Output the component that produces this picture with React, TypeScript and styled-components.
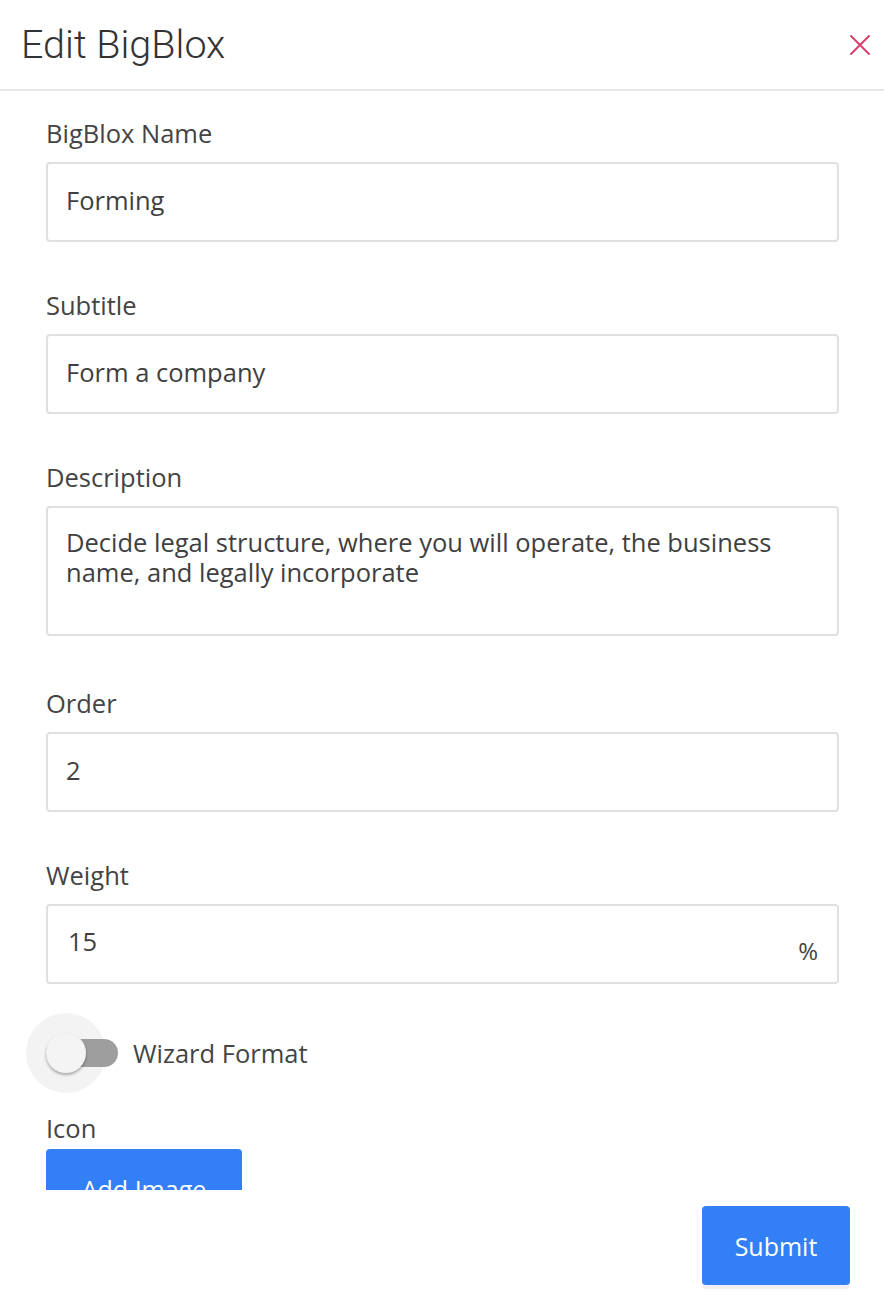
import React from 'react';
import styled, { createGlobalStyle } from 'styled-components';

const GlobalStyle = createGlobalStyle`
  html, body {
    margin: 0;
    padding: 0;
    background: #fff;
  }
  * {
    box-sizing: border-box;
  }
`;

const Modal = styled.div`
  width: 884px;
  height: 1300px;
  display: flex;
  flex-direction: column;
  font-family: 'Open Sans', Lato, sans-serif;
  color: #3f3f3f;
  background: #fff;
`;

const Header = styled.div`
  height: 91px;
  flex: none;
  display: flex;
  align-items: center;
  justify-content: space-between;
  padding: 0 12px 0 21px;
  border-bottom: 2px solid #e6e6e6;
`;

const Heading = styled.h1`
  margin: 0;
  font-family: Roboto, 'Liberation Sans', sans-serif;
  font-weight: 300;
  font-size: 39.5px;
  color: #333;
`;

const CloseButton = styled.button`
  border: 0;
  background: none;
  padding: 0;
  width: 24px;
  height: 24px;
  display: flex;
  align-items: center;
  justify-content: center;
  cursor: pointer;
`;

const Body = styled.div`
  flex: 1;
  overflow: hidden;
  padding: 24px 45px 0 46px;
`;

const Field = styled.div<{ $gap?: number }>`
  display: flex;
  flex-direction: column;
  margin-bottom: ${(p) => p.$gap ?? 45}px;
`;

const Label = styled.label<{ $space?: number }>`
  font-size: 25.5px;
  line-height: 36px;
  margin-bottom: ${(p) => p.$space ?? 11}px;
  color: #444;
`;

const InputBox = styled.div<{ $tall?: boolean }>`
  position: relative;
  height: ${(p) => (p.$tall ? 130 : 80)}px;
  border: 2px solid #e0e0e0;
  border-radius: 4px;
  padding: ${(p) => (p.$tall ? '19px 18px' : '0 18px 4px')};
  display: flex;
  align-items: ${(p) => (p.$tall ? 'flex-start' : 'center')};
  font-size: 25.5px;
  line-height: 30px;
  color: #3f3f3f;
`;

const NumberValue = styled.span`
  margin: -2px 0 0 2px;
`;

const Suffix = styled.span`
  position: absolute;
  right: 19px;
  bottom: 16px;
  font-size: 24px;
  color: #444;
`;

const ToggleRow = styled.div`
  display: flex;
  align-items: center;
  height: 80px;
  margin: 29px 0 0 -20px;
`;

const ToggleHalo = styled.div`
  position: relative;
  width: 80px;
  height: 80px;
  border-radius: 50%;
  background: #f3f3f3;
  flex: none;
`;

const Track = styled.div`
  position: absolute;
  left: 20px;
  top: 26px;
  width: 72px;
  height: 28px;
  border-radius: 14px;
  background: #9e9e9e;
`;

const Thumb = styled.div`
  position: absolute;
  left: 20px;
  top: 20px;
  width: 40px;
  height: 40px;
  border-radius: 50%;
  background: #f4f4f4;
  box-shadow: 0 2px 3px rgba(0, 0, 0, 0.3);
`;

const ToggleLabel = styled.span`
  margin-left: 27px;
  font-size: 25.5px;
  color: #444;
`;

const IconField = styled.div`
  display: flex;
  flex-direction: column;
  align-items: flex-start;
  margin-top: 17px;
`;

const BlueButton = styled.button<{ $w: number; $h: number }>`
  width: ${(p) => p.$w}px;
  height: ${(p) => p.$h}px;
  flex: none;
  border: 0;
  border-radius: 4px;
  background: #3380f6;
  color: #fff;
  font-family: 'Open Sans', Lato, sans-serif;
  font-size: 25px;
  cursor: pointer;
`;

const Footer = styled.div`
  height: 110px;
  flex: none;
  display: flex;
  justify-content: flex-end;
  align-items: flex-start;
  padding: 16px 34px 0 0;
`;

const SubmitButton = styled(BlueButton)`
  box-shadow: 0 4px 0 rgba(0, 0, 0, 0.06);
`;

const CloseIcon = () => (
  <svg width="22" height="22" viewBox="0 0 22 22" fill="none">
    <path d="M2 2L20 20M20 2L2 20" stroke="#d9416b" strokeWidth="2" strokeLinecap="round" />
  </svg>
);

const fields = [
  { label: 'BigBlox Name', value: 'Forming' },
  { label: 'Subtitle', value: 'Form a company' },
  {
    label: 'Description',
    value: 'Decide legal structure, where you will operate, the business name, and legally incorporate',
    tall: true,
  },
  { label: 'Order', value: '2' },
];

export default function App() {
  return (
    <>
      <GlobalStyle />
      <Modal>
        <Header>
          <Heading>Edit BigBlox</Heading>
          <CloseButton aria-label="Close">
            <CloseIcon />
          </CloseButton>
        </Header>
        <Body>
          {fields.map((f) => (
            <Field key={f.label} $gap={f.tall ? 49 : 45}>
              <Label>{f.label}</Label>
              <InputBox $tall={f.tall}>{f.value}</InputBox>
            </Field>
          ))}
          <Field $gap={0}>
            <Label>Weight</Label>
            <InputBox>
              <NumberValue>15</NumberValue>
              <Suffix>%</Suffix>
            </InputBox>
          </Field>
          <ToggleRow>
            <ToggleHalo>
              <Track />
              <Thumb />
            </ToggleHalo>
            <ToggleLabel>Wizard Format</ToggleLabel>
          </ToggleRow>
          <IconField>
            <Label $space={3}>Icon</Label>
            <BlueButton $w={196} $h={80}>Add Image</BlueButton>
          </IconField>
        </Body>
        <Footer>
          <SubmitButton $w={148} $h={79}>Submit</SubmitButton>
        </Footer>
      </Modal>
    </>
  );
}
